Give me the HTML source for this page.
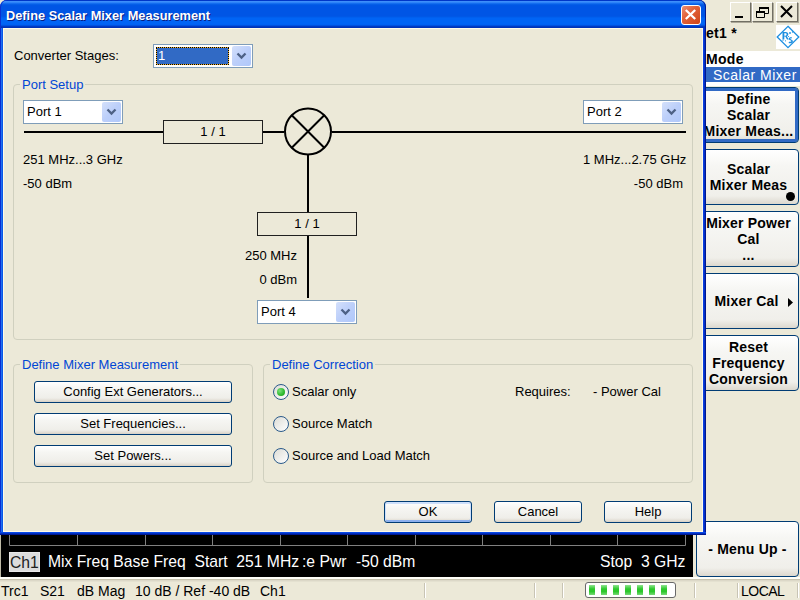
<!DOCTYPE html>
<html><head><meta charset="utf-8">
<style>
*{box-sizing:border-box;margin:0;padding:0}
html,body{width:800px;height:600px;overflow:hidden;background:#ece9d8;font-family:"Liberation Sans",sans-serif;font-size:13px;color:#000;position:relative}
.a{position:absolute}
.t{position:absolute;white-space:pre;line-height:16px}
/* dialog */
#dlg{left:0;top:0;width:706px;height:535px;background:#0a5ae0;border-radius:7px 7px 0 0}
#title{left:0;top:0;width:706px;height:28px;border-radius:7px 7px 0 0;box-shadow:inset 1px 0 0 #0a30d0,inset -1px 0 0 #001890;
background:linear-gradient(to bottom,#0036c8 0px,#0036c8 0.5px,#3d8efa 1.2px,#3d8efa 2px,#1f78f5 3px,#0a63ea 4px,#0058e5 5px,#0055e5 6px,#0055e5 16px,#005be9 17px,#0064f5 18px,#0064f5 24px,#005ef0 25px,#0044d0 26px,#0033b8 27px,#0033b8 28px)}
#lb{left:0;top:28px;width:3px;height:507px;background:linear-gradient(to right,#0a2cd0 0,#0a2cd0 1px,#2070f0 1px,#2070f0 2px,#0a58e8 2px)}
#rb{left:703px;top:28px;width:3px;height:507px;background:linear-gradient(to right,#0a40e0 0,#0a40e0 1px,#0430c8 1px,#0430c8 2px,#001890 2px)}
#bb{left:0;top:532px;width:706px;height:3px;background:linear-gradient(to bottom,#0848e8 0,#0848e8 1px,#0030c0 1px,#0030c0 2px,#001890 2px)}
#client{left:3px;top:28px;width:700px;height:504px;background:#ece9d8;border:1px solid #fffbe8}
.ttl{left:6px;top:8px;color:#fff;font-weight:bold;font-size:12.8px;text-shadow:1px 1px 0 #0a1e80}
#xbtn{left:681px;top:5px;width:20px;height:20px;border:1px solid #fff;border-radius:3px;background:linear-gradient(135deg,#eb8f76 0%,#e2623a 40%,#cf4416 100%)}
/* groupbox */
.gb{position:absolute;border:1px solid #d0d0bf;border-radius:4px}
.gl{position:absolute;color:#0046d5;background:#ece9d8;padding:0 2px;white-space:pre;line-height:16px}
/* combo */
.cb{position:absolute;width:100px;height:24px;background:#fff;border:1px solid #7f9db9}
.cb .dd{position:absolute;left:78px;top:1px;width:19px;height:20px;border-radius:2px;background:linear-gradient(135deg,#d4e0fb 0%,#bccffa 50%,#b0c8fa 100%)}
.cb .tx{position:absolute;left:3px;top:3px;line-height:16px}
/* buttons */
.btn{position:absolute;height:22px;border:1px solid #003c74;border-radius:3px;background:linear-gradient(to bottom,#ffffff 0%,#f6f6f3 30%,#efeee9 80%,#e2ded5 92%,#d6d0c5 100%);text-align:center;line-height:20px}
.rbtn{position:absolute;left:698px;width:101px;height:56px;border:1px solid #003c74;border-radius:4px;background:linear-gradient(to bottom,#ffffff 0%,#f6f6f3 30%,#f0efea 85%,#dcd8ce 100%);font-weight:bold;text-align:center;line-height:16px;font-size:14px;letter-spacing:0.2px}
.radio{position:absolute;width:16px;height:16px;border-radius:50%;border:1.3px solid #2a5a8a;background:linear-gradient(135deg,#dcdcd5,#fff)}
.wb{position:absolute;top:2px;height:20px;background:#ece9d8;border:1px solid;border-color:#fff #716f64 #716f64 #fff;box-shadow:1px 1px 0 #aca899}
.bk{position:absolute;color:#fff;font-size:15.7px;white-space:pre;line-height:18px}
.st{position:absolute;white-space:pre;line-height:16px;top:583px;font-size:14px}
</style></head><body>

<!-- right side app panel -->
<div class="wb" style="left:730px;width:21px"><svg class="a" style="left:0;top:0" width="21" height="20"><rect x="4" y="13" width="8" height="2" fill="#000"/></svg></div>
<div class="wb" style="left:752px;width:21px"><svg class="a" style="left:0;top:0" width="21" height="20"><path d="M6.5 4.5h9v6h-9z" fill="none" stroke="#000"/><rect x="6" y="4" width="10" height="2" fill="#000"/><path d="M3.5 8.5h8v6h-8z" fill="#ece9d8" stroke="#000"/><rect x="3" y="8" width="9" height="2" fill="#000"/></svg></div>
<div class="wb" style="left:776px;width:22px"><svg class="a" style="left:0;top:0" width="22" height="20"><path d="M4 3L15 14M15 3L4 14" stroke="#000" stroke-width="2"/></svg></div>
<div class="t" style="left:706px;top:25px;font-weight:bold;font-size:14px;letter-spacing:0.3px">et1 *</div>
<div class="a" style="left:776px;top:25px;width:24px;height:24px;background:#fff"></div>
<svg class="a" style="left:776px;top:25px" width="24" height="24" viewBox="0 0 24 24">
 <path d="M12 1.3L22.8 12L12 22.7L1.2 12Z" fill="none" stroke="#1d8fe0" stroke-width="1.3"/>
 <g fill="#1d8fe0">
  <path d="M6.5 7h3.2c1.8 0 2.6 1 2.6 2.2c0 1-0.6 1.7-1.5 2l2 3.3h-1.8l-1.7-3h-1v3h-1.8zM8.3 8.3v2.4h1.2c0.8 0 1.1-0.5 1.1-1.2c0-0.7-0.4-1.2-1.1-1.2z"/>
  <path d="M16 12.5c-1.6-0.4-3.3 0-3.2 1.4c0.1 1.3 2.6 1.2 2.6 2.2c0 0.7-1.2 0.9-2.4 0.6l-0.4 1.2c2 0.6 4.3 0.2 4.3-1.7c0-1.6-2.6-1.6-2.6-2.4c0-0.5 0.9-0.6 1.6-0.3z"/>
  <circle cx="14" cy="8" r="0.9"/><circle cx="16.5" cy="7" r="0.7"/><circle cx="12.5" cy="11.5" r="0.6"/><circle cx="7" cy="15.2" r="0.6"/><circle cx="9.5" cy="15.8" r="0.6"/>
 </g>
</svg>
<div class="a" style="left:706px;top:51px;width:94px;height:16px;background:#fff"></div>
<div class="t" style="left:706px;top:51px;font-weight:bold;font-size:14px;letter-spacing:0.3px">Mode</div>
<div class="a" style="left:706px;top:67px;width:94px;height:15px;background:#316ac5"></div>
<div class="t" style="left:713px;top:67px;color:#fff;font-size:14px;letter-spacing:0.5px">Scalar Mixer</div>
<div class="a" style="left:706px;top:82px;width:94px;height:4px;background:#fff"></div>

<div class="rbtn" style="top:87px;box-shadow:inset 0 0 0 3px #316ac5;padding-top:3px">Define<br>Scalar<br>Mixer Meas...</div>
<div class="rbtn" style="top:149px;padding-top:11px">Scalar<br>Mixer Meas</div>
<div class="a" style="left:786px;top:192px;width:9px;height:9px;border-radius:50%;background:#000"></div>
<div class="rbtn" style="top:211px;padding-top:3px">Mixer Power<br>Cal<br>...</div>
<div class="rbtn" style="top:273px;padding-top:19px;padding-right:4px">Mixer Cal</div>
<svg class="a" style="left:787px;top:297px" width="8" height="12"><path d="M1 1L6 5.5L1 10Z" fill="#000"/></svg>
<div class="rbtn" style="top:335px;padding-top:3px">Reset<br>Frequency<br>Conversion</div>
<div class="rbtn" style="top:521px;left:696px;width:103px;padding-top:19px">- Menu Up -</div>

<!-- black trace area -->
<div class="a" style="left:0;top:535px;width:693px;height:42px;background:#000;border-left:1px solid #c0bca8"></div>
<svg class="a" style="left:0;top:535px" width="693" height="43">
 <path d="M9.5 0V10.5H685.5V0M77.5 0V10M145.5 0V10M212.5 0V10M280.5 0V10M347.5 0V10M415.5 0V10M482.5 0V10M550.5 0V10M617.5 0V10" fill="none" stroke="#808080" stroke-width="1"/>
</svg>
<div class="a" style="left:9px;top:552px;width:31px;height:20px;background:#dcdcdc;border:1px solid #e8e8e8"></div>
<div class="bk" style="left:10px;top:554px;color:#202020">Ch1</div>
<div class="bk" style="left:48px;top:553px">Mix Freq Base Freq  Start  251 MHz</div>
<div class="bk" style="left:302px;top:553px">:e Pwr</div><div class="bk" style="left:356px;top:553px">-50 dBm</div>
<div class="bk" style="left:600px;top:553px">Stop  3 GHz</div>

<!-- status bar -->
<div class="a" style="left:0;top:577px;width:800px;height:23px;background:linear-gradient(to bottom,#fffff8 0,#fffff8 2px,#c8c4b0 2px,#c8c4b0 3px,#dcd8c8 3px,#dcd8c8 4px,#e4e1d0 4px,#e4e1d0 5px,#ece9d8 5px)"></div>
<div class="st" style="left:1px">Trc1</div>
<div class="st" style="left:40px">S21</div>
<div class="st" style="left:77px">dB Mag</div>
<div class="st" style="left:135px">10 dB / Ref -40 dB</div>
<div class="st" style="left:260px">Ch1</div>
<div class="a" style="left:424px;top:583px;width:2px;height:15px;border-left:1px solid #c8c4b4;border-right:1px solid #fff"></div>
<div class="a" style="left:534px;top:583px;width:2px;height:15px;border-left:1px solid #c8c4b4;border-right:1px solid #fff"></div>
<div class="a" style="left:562px;top:583px;width:2px;height:15px;border-left:1px solid #c8c4b4;border-right:1px solid #fff"></div>
<div class="a" style="left:694px;top:583px;width:2px;height:15px;border-left:1px solid #c8c4b4;border-right:1px solid #fff"></div>
<div class="a" style="left:737px;top:583px;width:2px;height:15px;border-left:1px solid #c8c4b4;border-right:1px solid #fff"></div>

<div class="a" style="left:585px;top:582px;width:91px;height:16px;border:1px solid #686868;border-radius:3px;background:#fff"></div>
<svg class="a" style="left:585px;top:582px" width="91" height="16">
 <defs><linearGradient id="gr" x1="0" y1="0" x2="0" y2="1"><stop offset="0" stop-color="#90e490"/><stop offset="0.4" stop-color="#2cc82c"/><stop offset="0.65" stop-color="#2cc82c"/><stop offset="1" stop-color="#78d878"/></linearGradient></defs>
 <g fill="url(#gr)"><rect x="4" y="3" width="6" height="10"/><rect x="16" y="3" width="6" height="10"/><rect x="28" y="3" width="6" height="10"/><rect x="40" y="3" width="6" height="10"/><rect x="52" y="3" width="6" height="10"/><rect x="64" y="3" width="6" height="10"/><rect x="76" y="3" width="6" height="10"/></g>
</svg>
<div class="st" style="left:741px;letter-spacing:-0.5px">LOCAL</div><div class="a" style="left:797px;top:583px;width:2px;height:15px;border-left:1px solid #c8c4b4;border-right:1px solid #fff"></div>

<!-- dialog -->
<div class="a" id="dlg"></div>
<div class="a" id="title"></div>
<div class="a" id="lb"></div>
<div class="a" id="rb"></div>
<div class="a" id="bb"></div>
<div class="a" id="client"></div>
<div class="t ttl">Define Scalar Mixer Measurement</div>
<div class="a" id="xbtn"><svg class="a" style="left:0;top:0" width="19" height="19"><path d="M3.8 4L13.2 13M13.2 4L3.8 13" stroke="#fff" stroke-width="2.3"/></svg></div>

<div class="t" style="left:14px;top:48px">Converter Stages:</div>
<div class="cb" style="left:153px;top:44px">
 <div class="a" style="left:2px;top:2px;width:73px;height:18px;border:1px dotted #000;background:#f0b030"></div>
 <div class="a" style="left:3px;top:3px;width:71px;height:16px;background:#316ac5"></div>
 <div class="tx" style="color:#fff;left:4px">1</div>
 <div class="dd"><svg class="a" style="left:0;top:0" width="19" height="20"><path d="M5.5 7.5L9.5 11.5L13.5 7.5" fill="none" stroke="#4d6185" stroke-width="2.3"/></svg></div></div>

<div class="gb" style="left:13px;top:84px;width:680px;height:256px"></div>
<div class="gl" style="left:20px;top:77px">Port Setup</div>

<div class="cb" style="left:23px;top:100px"><div class="tx">Port 1</div><div class="dd"><svg class="a" style="left:0;top:0" width="19" height="20"><path d="M5.5 7.5L9.5 11.5L13.5 7.5" fill="none" stroke="#4d6185" stroke-width="2.3"/></svg></div></div>
<div class="cb" style="left:583px;top:100px"><div class="tx">Port 2</div><div class="dd"><svg class="a" style="left:0;top:0" width="19" height="20"><path d="M5.5 7.5L9.5 11.5L13.5 7.5" fill="none" stroke="#4d6185" stroke-width="2.3"/></svg></div></div>
<div class="cb" style="left:257px;top:300px"><div class="tx">Port 4</div><div class="dd"><svg class="a" style="left:0;top:0" width="19" height="20"><path d="M5.5 7.5L9.5 11.5L13.5 7.5" fill="none" stroke="#4d6185" stroke-width="2.3"/></svg></div></div>

<svg class="a" style="left:0;top:0" width="800" height="600" viewBox="0 0 800 600">
 <g fill="none" stroke="#000">
  <rect x="163.5" y="120.5" width="99" height="23" stroke-width="1" stroke="#202020"/>
  <rect x="257.5" y="212.5" width="99" height="23" stroke-width="1" stroke="#202020"/>
  <path d="M24 132H163M263 132H284M332 132H686" stroke-width="2"/>
  <path d="M308 155V212M308 236V298" stroke-width="2"/>
  <circle cx="308" cy="131.5" r="23" stroke-width="2"/>
  <path d="M291.5 115L324.5 148M324.5 115L291.5 148" stroke-width="2"/>
 </g>
</svg>
<div class="t" style="left:163px;top:124px;width:100px;text-align:center">1 / 1</div>
<div class="t" style="left:257px;top:216px;width:100px;text-align:center">1 / 1</div>

<div class="t" style="left:23px;top:152px">251 MHz...3 GHz</div>
<div class="t" style="left:23px;top:176px">-50 dBm</div>
<div class="t" style="left:583px;top:152px;width:100px;text-align:right">1 MHz...2.75 GHz</div>
<div class="t" style="left:583px;top:176px;width:100px;text-align:right">-50 dBm</div>
<div class="t" style="left:197px;top:248px;width:100px;text-align:right">250 MHz</div>
<div class="t" style="left:197px;top:272px;width:100px;text-align:right">0 dBm</div>

<div class="gb" style="left:13px;top:364px;width:240px;height:119px"></div>
<div class="gl" style="left:20px;top:357px">Define Mixer Measurement</div>
<div class="btn" style="left:34px;top:381px;width:198px">Config Ext Generators...</div>
<div class="btn" style="left:34px;top:413px;width:198px">Set Frequencies...</div>
<div class="btn" style="left:34px;top:445px;width:198px">Set Powers...</div>

<div class="gb" style="left:263px;top:364px;width:430px;height:119px"></div>
<div class="gl" style="left:270px;top:357px">Define Correction</div>
<div class="radio" style="left:273px;top:384px"><div class="a" style="left:2.6px;top:2.6px;width:8px;height:8px;border-radius:50%;background:radial-gradient(circle at 35% 35%,#7ae07a,#2db82d 60%,#1e9a1e)"></div></div>
<div class="radio" style="left:273px;top:416px"></div>
<div class="radio" style="left:273px;top:448px"></div>
<div class="t" style="left:292px;top:384px">Scalar only</div>
<div class="t" style="left:292px;top:416px">Source Match</div>
<div class="t" style="left:292px;top:448px">Source and Load Match</div>
<div class="t" style="left:515px;top:384px">Requires:</div>
<div class="t" style="left:593px;top:384px">- Power Cal</div>

<div class="btn" style="left:384px;top:501px;width:88px;box-shadow:inset 0 1px 0 1px #cee0fb, inset 0 -1px 0 1px #8cb0ee">OK</div>
<div class="btn" style="left:494px;top:501px;width:88px">Cancel</div>
<div class="btn" style="left:604px;top:501px;width:88px">Help</div>

</body></html>
